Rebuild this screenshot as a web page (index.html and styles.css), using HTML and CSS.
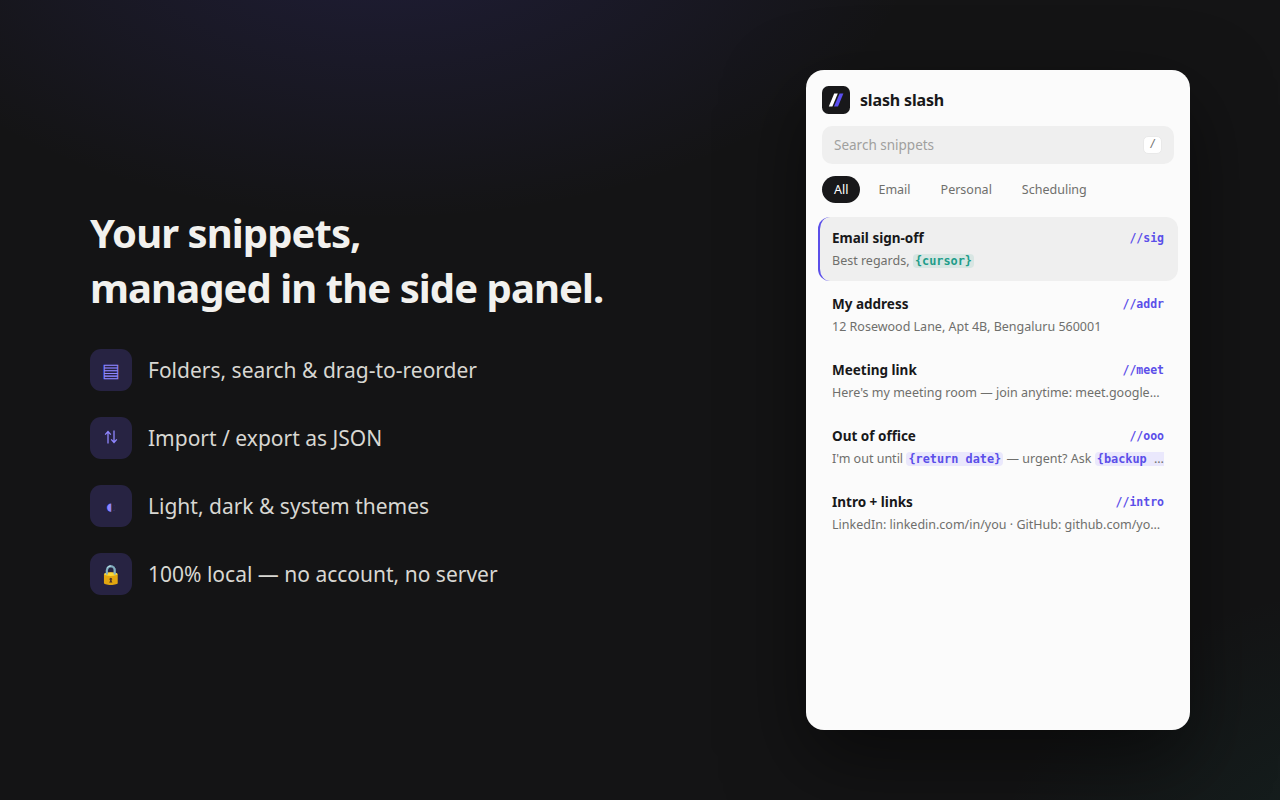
FILE: index.html
```html
<!DOCTYPE html>
<html lang="en">
<head>
  <meta charset="UTF-8">
  <meta name="viewport" content="width=device-width, initial-scale=1.0">
  <title>slash slash</title>
  <link rel="stylesheet" href="styles.css">
</head>
<body>
  <div class="copy">
    <h1>Your snippets,<br>managed in the side panel.</h1>
    <ul class="features">
      <li><span class="ic">▤</span>Folders, search &amp; drag-to-reorder</li>
      <li>
        <span class="ic">
          <svg width="16" height="16" viewBox="0 0 16 16" fill="none" stroke="currentColor" stroke-width="1.3">
            <path d="M5 13.5V1.5M2.2 4.6L5 1.5l2.8 3.1"/>
            <path d="M11 .5v12M8.2 9.4l2.8 3.1 2.8-3.1"/>
          </svg>
        </span>Import / export as JSON
      </li>
      <li><span class="ic">◐</span>Light, dark &amp; system themes</li>
      <li><span class="ic">🔒</span>100% local — no account, no server</li>
    </ul>
  </div>

  <div class="panel">
    <div class="panel-head">
      <svg class="logo" width="28" height="28" viewBox="0 0 28 28">
        <rect width="28" height="28" rx="6.5" fill="#18181a"/>
        <path d="M12.2 7.5h3.6l-5.4 13H6.8z" fill="#fff"/>
        <path d="M17.6 7.5h3.8l-5.4 13h-4z" fill="#5b4ff0"/>
      </svg>
      <span class="name">slash slash</span>
    </div>

    <div class="search">
      <span>Search snippets</span>
      <kbd>/</kbd>
    </div>

    <div class="tabs">
      <span class="tab active">All</span>
      <span class="tab">Email</span>
      <span class="tab">Personal</span>
      <span class="tab">Scheduling</span>
    </div>

    <div class="list">
      <div class="item selected">
        <div class="row"><span class="title">Email sign-off</span><span class="trigger">//sig</span></div>
        <div class="preview">Best regards, <span class="var cursor">{cursor}</span></div>
      </div>
      <div class="item">
        <div class="row"><span class="title">My address</span><span class="trigger">//addr</span></div>
        <div class="preview">12 Rosewood Lane, Apt 4B, Bengaluru 560001</div>
      </div>
      <div class="item">
        <div class="row"><span class="title">Meeting link</span><span class="trigger">//meet</span></div>
        <div class="preview">Here's my meeting room — join anytime: meet.google…</div>
      </div>
      <div class="item">
        <div class="row"><span class="title">Out of office</span><span class="trigger">//ooo</span></div>
        <div class="preview">I'm out until <span class="var">{return date}</span> — urgent? Ask <span class="var">{backup contact}</span></div>
      </div>
      <div class="item">
        <div class="row"><span class="title">Intro + links</span><span class="trigger">//intro</span></div>
        <div class="preview">LinkedIn: linkedin.com/in/you · GitHub: github.com/yo…</div>
      </div>
    </div>
  </div>
</body>
</html>
```
FILE: styles.css
```css
:root {
  --ink: #18181a;
  --accent: #5b4fe9;
  --muted: #6f6f6c;
  --fill: #efefef;
  --mono: "DejaVu Sans Mono", monospace;
}

* {
  box-sizing: border-box;
}

body {
  margin: 0;
  width: 1280px;
  height: 800px;
  padding: 0 90px;
  display: flex;
  align-items: center;
  justify-content: space-between;
  overflow: hidden;
  font-family: "Noto Sans", sans-serif;
  background:
    radial-gradient(900px 500px at 30% -10%, rgba(91, 79, 240, 0.16), transparent 60%),
    radial-gradient(700px 500px at 110% 110%, rgba(31, 157, 138, 0.1), transparent 60%),
    #141415;
}

.copy h1 {
  margin: 0 0 34px;
  font-size: 40px;
  font-weight: 700;
  letter-spacing: -0.94px;
  color: #f2f1ee;
}

.features {
  list-style: none;
  margin: 0;
  padding: 0;
  display: flex;
  flex-direction: column;
  gap: 26px;
}

.features li {
  display: flex;
  align-items: center;
  gap: 16px;
  font-size: 21px;
  color: #d8d7d2;
}

.ic {
  width: 42px;
  height: 42px;
  border-radius: 11px;
  display: flex;
  align-items: center;
  justify-content: center;
  font-size: 19px;
  color: #8f86ff;
  background: #272342;
}

.panel {
  width: 384px;
  height: 660px;
  border-radius: 18px;
  background: #fbfbfb;
  color: var(--ink);
  box-shadow: 0 30px 80px rgba(0, 0, 0, 0.5);
}

.panel-head {
  display: flex;
  align-items: center;
  gap: 10px;
  padding: 16px 16px 12px;
}

.name {
  font-size: 16px;
  font-weight: 700;
  line-height: 22px;
  letter-spacing: -0.01em;
}

.search {
  height: 38px;
  margin: 0 16px;
  padding: 0 12px;
  display: flex;
  align-items: center;
  justify-content: space-between;
  border-radius: 10px;
  background: var(--fill);
  color: #a0a09e;
  font-size: 13.5px;
}

.search kbd {
  padding: 0 5px 3px;
  border: 1px solid #e9e9e9;
  border-radius: 5px;
  background: #fff;
  color: var(--muted);
  font-family: var(--mono);
  font-size: 11px;
}

.tabs {
  display: flex;
  gap: 6px;
  padding: 12px 16px 14px;
}

.tab {
  padding: 5px 12px;
  border-radius: 999px;
  font-size: 12.5px;
  line-height: 17px;
  color: var(--muted);
}

.tab.active {
  background: var(--ink);
  color: #fff;
}

.list {
  display: flex;
  flex-direction: column;
  gap: 2px;
  padding: 0 12px;
}

.item {
  height: 64px;
  padding: 10px 14px 10px 12px;
  border-left: 2px solid transparent;
  border-radius: 12px;
}

.item.selected {
  background: var(--fill);
  border-left-color: var(--accent);
}

.row {
  display: flex;
  align-items: center;
  justify-content: space-between;
  line-height: 22px;
}

.title {
  font-size: 13.5px;
  font-weight: 700;
}

.trigger {
  font-family: var(--mono);
  font-size: 11.5px;
  font-weight: 600;
  color: var(--accent);
}

.preview {
  margin-top: 2px;
  font-size: 12.5px;
  line-height: 19px;
  color: var(--muted);
  white-space: nowrap;
  overflow: hidden;
  text-overflow: ellipsis;
}

.var {
  padding: 0 2.1px;
  border-radius: 4px;
  font-family: var(--mono);
  font-size: 0.95em;
  font-weight: 600;
  color: var(--accent);
  background: #eae8fc;
}

.var.cursor {
  color: #1f9d8a;
  background: #d8e6e3;
}
```
